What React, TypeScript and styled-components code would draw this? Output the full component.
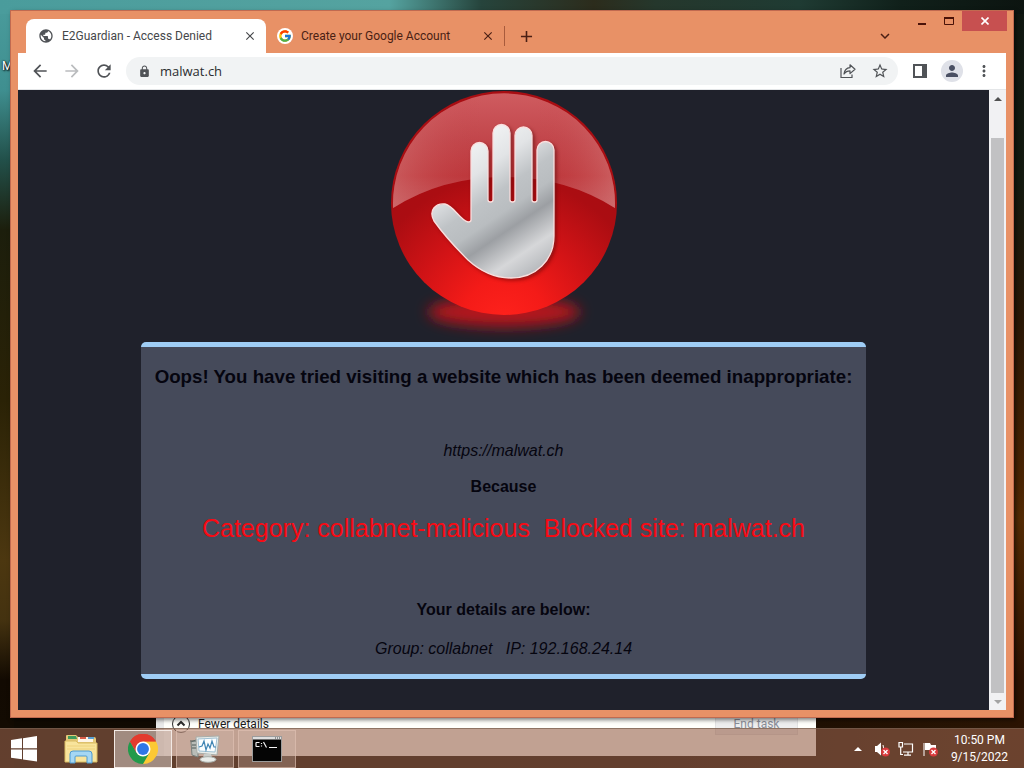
import React from "react";
import styled, { createGlobalStyle } from "styled-components";
import {
  MdArrowBack,
  MdArrowForward,
  MdRefresh,
  MdLock,
  MdStarBorder,
  MdPerson,
  MdMoreVert,
  MdPublic,
  MdClose,
  MdAdd,
  MdExpandMore,
} from "react-icons/md";
import { FcGoogle } from "react-icons/fc";

const GlobalStyle = createGlobalStyle`
  * { box-sizing: border-box; }
  body { margin: 0; font-family: Roboto, "Noto Sans", sans-serif; }
  button { padding: 0; border: 0; background: none; color: inherit; font: inherit; cursor: pointer; }
`;

const Desktop = styled.main`
  position: relative;
  display: flex;
  flex-direction: column;
  height: 100vh;
  min-height: 480px;
  overflow: hidden;
  background:
    linear-gradient(90deg, #4a9c9c 0%, #55a3a0 38%, #26443c 47%, #2c2c1c 58%, #25372c 64%, #1f3b33 78%, #10201a 88%, #0c1410 100%) top / 100% 14px no-repeat,
    linear-gradient(180deg, #4a9c9c 0, #3f8f90 90px, #22504a 160px, #1c1e0c 230px, #2a2206 400px, #4c3710 560px, #443210 620px, #120a02 680px, #140c02 100%) left / 14px 100% no-repeat,
    linear-gradient(180deg, #0f1711 0, #141a10 180px, #2a1705 320px, #4a2403 480px, #532a04 520px, #2c1202 680px, #2a1302 100%) right / 14px 100% no-repeat,
    linear-gradient(90deg, #100a02, #140a02 60%, #2c1604);
`;

const IconLabel = styled.span`
  position: absolute;
  left: 2px;
  top: 57px;
  font-size: 12px;
  line-height: 18px;
  color: #fff;
  text-shadow: 1px 1px 2px #000, 0 0 2px #000;
`;

const TaskManager = styled.section`
  position: absolute;
  left: 156px;
  right: 208px;
  bottom: 12px;
  height: 60px;
  display: flex;
  align-items: center;
  gap: 8px;
  padding: 0 18px 4px 16px;
  border-left: 8px solid #e9e9e9;
  background: #fffffb;
  font-size: 12px;
  line-height: 16px;
  color: #1c1c1c;
`;

const FewerDetails = styled.button`
  display: flex;
  align-items: center;
  gap: 8px;
  margin-left: -8px;
`;

const EndTask = styled.button`
  width: 83px;
  height: 21px;
  margin-left: auto;
  background: #eeeeee;
  border: 1px solid #e2e2e2;
  color: #8b8f99;
`;

const BrowserWindow = styled.section`
  position: relative;
  flex: 1;
  min-height: 0;
  display: flex;
  flex-direction: column;
  margin: 10px;
  padding: 0 7px 7px;
  border: 1px solid #c06a50;
  background: #e89166;
  box-shadow: 2px 2px 4px rgba(0, 0, 0, 0.5);
`;

const TitleBar = styled.header`
  display: flex;
  height: 42px;
  flex: none;
  align-items: stretch;
  padding-left: 8px;
  color: #4a1f14;
`;

const Tab = styled.div<{ $active?: boolean }>`
  display: flex;
  align-items: center;
  gap: 8px;
  width: ${(p) => (p.$active ? 240 : 238)}px;
  margin-top: 8px;
  padding: 0 9px 0 ${(p) => (p.$active ? 12 : 11)}px;
  border-radius: 8px 8px 0 0;
  background: ${(p) => (p.$active ? "#fff" : "transparent")};
  color: ${(p) => (p.$active ? "#45474a" : "#4a1f14")};
  font-size: 12px;
  line-height: 16px;
`;

const TabName = styled.button`
  flex: 1;
  display: flex;
  align-items: center;
  gap: 8px;
  text-align: left;
  white-space: nowrap;
`;

const SquareButton = styled.button`
  display: grid;
  place-items: center;
  width: 14px;
  height: 14px;
`;

const Favicon = styled.span`
  display: grid;
  place-items: center;
  width: 16px;
  height: 16px;
  border-radius: 50%;
  background: #fff;
`;

const NewTab = styled.button`
  display: grid;
  place-items: center;
  align-self: center;
  width: 44px;
  height: 20px;
  margin-top: 8px;
  border-left: 1px solid #a85b3c;
`;

const TabSearch = styled.button`
  display: grid;
  place-items: center;
  align-self: center;
  width: 20px;
  height: 20px;
  margin: 8px 13px 0 auto;
`;

const WindowControls = styled.div`
  display: flex;
  align-items: flex-start;
  margin-right: -1px;
`;

const Control = styled.button<{ $close?: boolean }>`
  display: grid;
  place-items: center;
  width: ${(p) => (p.$close ? 45 : 27)}px;
  height: 20px;
  background: ${(p) => (p.$close ? "#c75050" : "transparent")};
  color: ${(p) => (p.$close ? "#fff" : "#4a1208")};
`;

const Toolbar = styled.nav`
  display: flex;
  flex: none;
  align-items: center;
  height: 37px;
  padding: 0 6px;
  background: #fff;
  color: #505357;
  border-bottom: 1px solid #e4e6e8;
`;

const ToolButton = styled.button<{ $faded?: boolean }>`
  display: grid;
  place-items: center;
  width: 32px;
  height: 28px;
  color: ${(p) => (p.$faded ? "#babcbe" : "#505357")};
`;

const AddressBar = styled.div`
  flex: 1;
  display: flex;
  align-items: center;
  height: 28px;
  margin: 0 6px;
  padding: 0 2px 0 12px;
  border-radius: 14px;
  background: #f1f3f4;
`;

const AddressInput = styled.input`
  flex: 1;
  min-width: 0;
  margin-left: 9px;
  padding: 0;
  border: 0;
  outline: 0;
  background: none;
  font-family: "Open Sans", "Noto Sans", sans-serif;
  font-size: 13px;
  color: #2b2d30;
`;

const Avatar = styled.span`
  display: grid;
  place-items: center;
  width: 22px;
  height: 22px;
  border-radius: 50%;
  background: #dfe1e8;
  color: #4a5063;
`;

const Viewport = styled.div`
  flex: 1;
  min-height: 0;
  display: flex;
  background: #1f212b;
`;

const Page = styled.article`
  flex: 1;
  min-width: 0;
  overflow: hidden;
  display: flex;
  flex-direction: column;
  align-items: center;
  font-family: "Liberation Sans", Arial, sans-serif;
  text-align: center;
  color: #05050f;
`;

const Notice = styled.section`
  flex: none;
  margin-top: 2px;
  padding: 0 14px;
  border-top: 5px solid #9fcdf5;
  border-bottom: 5px solid #9fcdf5;
  border-radius: 5px;
  background: #454a5a;
  font-size: 16px;
  line-height: 18px;
`;

const Headline = styled.h3`
  margin: 18px 0 53px;
  line-height: 24px;
`;

const Line = styled.p`
  margin: 0 0 18px;
  font-style: italic;
  white-space: pre;

  &:last-child {
    margin-bottom: 16px;
  }
`;

const Subhead = styled.h4`
  margin: 0 0 21px;
  font-size: 16px;
  line-height: 18px;
`;

const Reason = styled.p`
  margin: 0 0 62px;
  font-size: 25px;
  line-height: 22px;
  color: #f80a14;
  white-space: pre;
`;

const Scrollbar = styled.div`
  flex: none;
  display: flex;
  flex-direction: column;
  width: 17px;
  background: #f1f1f3;
`;

const ScrollArrow = styled.button<{ $faded?: boolean }>`
  display: grid;
  place-items: center;
  height: 17px;
  color: ${(p) => (p.$faded ? "#a3a3a3" : "#505050")};
`;

const ScrollThumb = styled.div`
  flex: 1;
  margin: 31px 2px 0;
  background: #c1c1c3;
`;

const Taskbar = styled.footer`
  position: relative;
  flex: none;
  display: flex;
  align-items: center;
  height: 40px;
  padding-right: 16px;
  border-top: 1px solid rgba(120, 95, 80, 0.7);
  background: rgba(152, 98, 76, 0.6);
  color: #fff;
`;

const TaskButton = styled.button<{ $width: number; $state?: "open" | "active" }>`
  display: grid;
  place-items: center;
  width: ${(p) => p.$width}px;
  height: 38px;
  margin-right: ${(p) => (p.$state ? 4 : 0)}px;
  border: ${(p) => (p.$state ? "1px solid" : "0")};
  border-color: ${(p) => (p.$state === "active" ? "#f3e9e4" : "rgba(225, 195, 180, 0.6)")};
  background: ${(p) =>
    p.$state === "active" ? "rgba(225, 215, 210, 0.5)" : p.$state ? "rgba(215, 190, 178, 0.28)" : "none"};
`;

const Tray = styled.div`
  display: flex;
  align-items: center;
  gap: 8px;
  margin-left: auto;
`;

const TrayButton = styled.button`
  display: grid;
  place-items: center;
  width: 16px;
  height: 18px;
`;

const Clock = styled.time`
  margin-left: 5px;
  font-size: 12px;
  line-height: 17px;
  text-align: center;
`;

const HAND =
  "M87 130V61a8.500 8.500 0 0 1 17 0V110q0 2 2.500 2t2.500-2V43a8.500 8.500 0 0 1 17 0V110q0 2 2.500 2t2.500-2V45.500a8.500 8.500 0 0 1 17 0V110q0 2 2.500 2t2.500-2V60a8.500 8.500 0 0 1 17 0V146C170 170 152 188 127 188C109 188 95 180 84 170C72 158 60 145 50 131C44 120 52 113 61 114C70 116 76 130 84 132Q87 132 87 130Z";
const GLOSS = "M9.100 118A111 110 0 1 1 230.900 118Q182 87 120 87T9.100 118Z";

const StopHand = () => (
  <svg width="240" height="250" viewBox="0 0 240 250" role="img" aria-label="Stop">
    <defs>
      <radialGradient id="ball" gradientUnits="userSpaceOnUse" cx="120" cy="232" r="170">
        <stop offset="0" stopColor="#ff221c" />
        <stop offset="0.25" stopColor="#f41b18" />
        <stop offset="0.55" stopColor="#d01316" />
        <stop offset="0.85" stopColor="#ab0d12" />
        <stop offset="1" stopColor="#a80d12" />
      </radialGradient>
      <linearGradient id="gloss" x1="0" y1="0" x2="0" y2="1">
        <stop offset="0" stopColor="#cf5c60" />
        <stop offset="0.4" stopColor="#c2464b" />
        <stop offset="0.72" stopColor="#bd373b" />
        <stop offset="1" stopColor="#c25054" />
      </linearGradient>
      <linearGradient id="sheen" x1="0" y1="0" x2="1" y2="0">
        <stop offset="0" stopColor="#dc8d8c" stopOpacity="0.4" />
        <stop offset="0.4" stopColor="#c64146" stopOpacity="0" />
        <stop offset="0.65" stopColor="#c64146" stopOpacity="0" />
        <stop offset="1" stopColor="#dc8d8c" stopOpacity="0.45" />
      </linearGradient>
      <linearGradient id="steel" gradientUnits="userSpaceOnUse" x1="70" y1="50" x2="160" y2="184">
        <stop offset="0" stopColor="#f6f8f8" />
        <stop offset="0.25" stopColor="#e2e4e6" />
        <stop offset="0.42" stopColor="#bfc3c6" />
        <stop offset="0.54" stopColor="#b9bdc0" />
        <stop offset="0.65" stopColor="#9c9fa3" />
        <stop offset="0.82" stopColor="#d6d7d9" />
        <stop offset="1" stopColor="#aeb1b5" />
      </linearGradient>
      <filter id="soft" x="-20%" y="-20%" width="140%" height="140%">
        <feGaussianBlur stdDeviation="2" />
      </filter>
      <filter id="haze" x="-30%" y="-100%" width="160%" height="300%">
        <feGaussianBlur stdDeviation="7" />
      </filter>
    </defs>
    <ellipse cx="120" cy="222" rx="76" ry="15" fill="#b4181c" filter="url(#haze)" />
    <ellipse cx="120" cy="113" rx="113" ry="112" fill="url(#ball)" />
    <path d={GLOSS} fill="url(#gloss)" />
    <path d={GLOSS} fill="url(#sheen)" />
    <path d={HAND} transform="translate(2 2)" fill="#5b0b0e" opacity="0.7" filter="url(#soft)" />
    <path d={HAND} fill="url(#steel)" stroke="#fbdedd" strokeWidth="1.300" />
  </svg>
);

const ShareIcon = () => (
  <svg width="16" height="16" viewBox="0 0 16 16" fill="none" stroke="currentColor" strokeWidth="1.200" aria-hidden="true">
    <path d="M1 5V14.500H12V11.500" />
    <path d="M4 11C4.500 7 6.500 5 10 4.700V1.800L15 6.300 10 10.600V7.800C7.500 7.800 5.500 8.700 4 11Z" strokeLinejoin="round" />
  </svg>
);

const WindowsLogo = () => (
  <svg width="26" height="26" viewBox="0 0 26 26" fill="#fff" aria-hidden="true">
    <path d="M0 4 11 2.300V12.300H0ZM12 2.200 26 0V12.300H12ZM0 13.400H11V23.300L0 21.700ZM12 13.400H26V25.500L12 23.400Z" />
  </svg>
);

const ExplorerIcon = () => (
  <svg width="34" height="30" viewBox="0 0 34 30" aria-hidden="true">
    <path d="M2 5V2q0-1 1-1h9l2 2h16q2 0 2 2v22H2Z" fill="#e4c878" />
    <path d="M4 2h8l1 3H4Z" fill="#3f9b5c" />
    <path d="M14 3h15v5H14Z" fill="#fff5e6" />
    <path d="M16 3h6v2h-6Z" fill="#d85c48" />
    <path d="M24 3h6v2h-6Z" fill="#5aa2d4" />
    <path d="M1 7H12l2 2H33V28H1Z" fill="#f8e49c" stroke="#d9bb63" />
    <path d="M3 12H31M3 15H31" stroke="#eed27c" />
    <path d="M6 29V20q0-3 3-3H25q3 0 3 3v9H23V23q0-1-1-1H12q-1 0-1 1v6Z" fill="#a5d7f3" stroke="#4c9ad0" />
  </svg>
);

const ChromeLogo = () => (
  <svg width="30" height="30" viewBox="0 0 48 48" aria-hidden="true">
    <path d="M24 24 3.200 12A24 24 0 0 1 44.800 12Z" fill="#e33b2e" />
    <path d="M24 24V12H44.800A24 24 0 0 1 24 48Z" fill="#fcc934" />
    <path d="M3.200 12 13.600 30 24 24 34.400 30 24 48A24 24 0 0 1 3.200 12Z" fill="#229a4b" />
    <path d="M24 12H44.800L34.400 30Z" fill="#fcc934" />
    <path d="M3.200 12A24 24 0 0 1 44.800 12H24L13.600 30Z" fill="#e33b2e" />
    <circle cx="24" cy="24" r="12" fill="#fff" />
    <circle cx="24" cy="24" r="9.500" fill="#2f77e6" />
  </svg>
);

const MonitorIcon = () => (
  <svg width="30" height="28" viewBox="0 0 30 28" aria-hidden="true">
    <path d="M1 7 8 4V22L2 20Z" fill="#b9bdb8" stroke="#77807c" />
    <path d="M0 6H6M2 10H7M2 13H7" stroke="#4f5b58" />
    <path d="M6 2 29 1 27 20 7 18Z" fill="#e8ece9" stroke="#a8ada9" />
    <path d="M8 4 27 3 25 17 9 16Z" fill="#fbfeff" stroke="#9fc0d2" />
    <path d="M9 12 12 11 14 6 16 15 18 9 20 13 22 6 24 12H26" fill="none" stroke="#3f85b4" strokeWidth="1.200" />
    <path d="M14 19H21L22 23H13Z" fill="#c9cdca" />
    <ellipse cx="18" cy="24.500" rx="8" ry="2.800" fill="#e9ece9" stroke="#a8ada9" />
  </svg>
);

const ConsoleIcon = () => (
  <svg width="30" height="26" viewBox="0 0 30 26" aria-hidden="true">
    <rect x="0.500" y="0.500" width="29" height="25" fill="#050505" stroke="#9c9c9c" />
    <rect x="1" y="1" width="28" height="2.500" fill="#dedede" />
    <path d="M23 2H24M25 2H26M27 2H28" stroke="#444" />
    <g fill="none" stroke="#f4f4f4" strokeWidth="1.200">
      <path d="M7.500 6.500H4.500Q4 6.500 4 7V10Q4 10.500 4.500 10.500H7.500M9.500 7V8M9.500 9.500V10.500M11.500 6 14.500 11.500M17 11.500H25" />
    </g>
  </svg>
);

const RedCross = () => (
  <g>
    <circle cx="11.500" cy="11" r="4.500" fill="#d83a3c" />
    <path d="M9.500 9 13.500 13M13.500 9 9.500 13" stroke="#fff" strokeWidth="1.300" />
  </g>
);

const VolumeIcon = () => (
  <svg width="16" height="16" viewBox="0 0 16 16" aria-hidden="true">
    <path d="M1 5H3L7 1.500V14.500L3 11H1Z" fill="#fff" />
    <path d="M9 4Q10.500 8 9 12" fill="none" stroke="#fff" />
    <RedCross />
  </svg>
);

const NetworkIcon = () => (
  <svg width="16" height="16" viewBox="0 0 16 16" fill="none" stroke="#fff" strokeWidth="1.200" aria-hidden="true">
    <path d="M6 3H14.500V11H5M10 11V14M6 14.200H13" />
    <path d="M1 1.500H4.500V6H1ZM2.700 6V13.500H5" />
  </svg>
);

const FlagIcon = () => (
  <svg width="16" height="16" viewBox="0 0 16 16" aria-hidden="true">
    <path d="M2 2V15" stroke="#fff" />
    <path d="M3 2H8L9 4H14V10L8 9H3Z" fill="#fff" />
    <RedCross />
  </svg>
);

const Triangle = ({ down }: { down?: boolean }) => (
  <svg width="8" height="4" viewBox="0 0 8 4" fill="currentColor" aria-hidden="true">
    <path d={down ? "M0 0H8L4 4Z" : "M0 4H8L4 0Z"} />
  </svg>
);

export default function App() {
  return (
    <Desktop>
      <GlobalStyle />
      <IconLabel>M</IconLabel>
      <TaskManager aria-label="Task Manager">
        <FewerDetails>
          <svg width="18" height="18" viewBox="0 0 18 18" fill="none" stroke="#2c2c2c" aria-hidden="true">
            <circle cx="9" cy="9" r="8.500" />
            <path d="M5.500 10.500 9 7 12.500 10.500" strokeWidth="2" />
          </svg>
          Fewer details
        </FewerDetails>
        <EndTask>End task</EndTask>
      </TaskManager>

      <BrowserWindow aria-label="Browser">
        <TitleBar>
          <Tab $active>
            <TabName>
              <MdPublic size={16} color="#505357" />
              E2Guardian - Access Denied
            </TabName>
            <SquareButton aria-label="Close tab">
              <MdClose size={14} />
            </SquareButton>
          </Tab>
          <Tab>
            <TabName>
              <Favicon>
                <FcGoogle size={14} />
              </Favicon>
              Create your Google Account
            </TabName>
            <SquareButton aria-label="Close tab">
              <MdClose size={14} />
            </SquareButton>
          </Tab>
          <NewTab aria-label="New tab">
            <MdAdd size={19} />
          </NewTab>
          <TabSearch aria-label="Search tabs">
            <MdExpandMore size={18} />
          </TabSearch>
          <WindowControls>
            <Control aria-label="Minimize">
              <svg width="8" height="12" viewBox="0 0 8 12" aria-hidden="true">
                <path d="M0 9H8" stroke="currentColor" strokeWidth="2" />
              </svg>
            </Control>
            <Control aria-label="Maximize">
              <svg width="10" height="8" viewBox="0 0 10 8" fill="none" stroke="currentColor" aria-hidden="true">
                <path d="M0.500 1V7.500H9.500V1" />
                <path d="M0 1H10" strokeWidth="2" />
              </svg>
            </Control>
            <Control $close aria-label="Close">
              <svg width="8" height="8" viewBox="0 0 8 8" aria-hidden="true">
                <path d="M0.500 0.500 7.500 7.500M7.500 0.500 0.500 7.500" stroke="currentColor" strokeWidth="1.600" />
              </svg>
            </Control>
          </WindowControls>
        </TitleBar>

        <Toolbar>
          <ToolButton aria-label="Back">
            <MdArrowBack size={20} />
          </ToolButton>
          <ToolButton $faded aria-label="Forward">
            <MdArrowForward size={20} />
          </ToolButton>
          <ToolButton aria-label="Reload">
            <MdRefresh size={20} />
          </ToolButton>
          <AddressBar>
            <MdLock size={13} />
            <AddressInput aria-label="Address" defaultValue="malwat.ch" />
            <ToolButton aria-label="Share">
              <ShareIcon />
            </ToolButton>
            <ToolButton aria-label="Bookmark">
              <MdStarBorder size={18} />
            </ToolButton>
          </AddressBar>
          <ToolButton aria-label="Side panel">
            <svg width="14" height="14" viewBox="0 0 14 14" aria-hidden="true">
              <path d="M1 1H13V13H1Z" fill="none" stroke="currentColor" strokeWidth="2" />
              <path d="M9 0H14V14H9Z" fill="currentColor" />
            </svg>
          </ToolButton>
          <ToolButton aria-label="Profile">
            <Avatar>
              <MdPerson size={18} />
            </Avatar>
          </ToolButton>
          <ToolButton aria-label="Menu">
            <MdMoreVert size={18} />
          </ToolButton>
        </Toolbar>

        <Viewport>
          <Page>
            <StopHand />
            <Notice>
              <Headline>Oops! You have tried visiting a website which has been deemed inappropriate:</Headline>
              <Line>https://malwat.ch</Line>
              <Subhead>Because</Subhead>
              <Reason>{"Category: collabnet-malicious  Blocked site: malwat.ch"}</Reason>
              <Subhead>Your details are below:</Subhead>
              <Line>{"Group: collabnet   IP: 192.168.24.14"}</Line>
            </Notice>
          </Page>
          <Scrollbar>
            <ScrollArrow aria-label="Scroll up">
              <Triangle />
            </ScrollArrow>
            <ScrollThumb />
            <ScrollArrow $faded aria-label="Scroll down">
              <Triangle down />
            </ScrollArrow>
          </Scrollbar>
        </Viewport>
      </BrowserWindow>

      <Taskbar>
        <TaskButton $width={48} aria-label="Start">
          <WindowsLogo />
        </TaskButton>
        <TaskButton $width={66} aria-label="File Explorer">
          <ExplorerIcon />
        </TaskButton>
        <TaskButton $width={58} $state="active" aria-label="Google Chrome">
          <ChromeLogo />
        </TaskButton>
        <TaskButton $width={58} $state="open" aria-label="Task Manager">
          <MonitorIcon />
        </TaskButton>
        <TaskButton $width={58} $state="open" aria-label="Command Prompt">
          <ConsoleIcon />
        </TaskButton>
        <Tray>
          <TrayButton aria-label="Show hidden icons">
            <Triangle />
          </TrayButton>
          <TrayButton aria-label="Volume">
            <VolumeIcon />
          </TrayButton>
          <TrayButton aria-label="Network">
            <NetworkIcon />
          </TrayButton>
          <TrayButton aria-label="Action Center">
            <FlagIcon />
          </TrayButton>
          <Clock>
            10:50 PM
            <br />
            9/15/2022
          </Clock>
        </Tray>
      </Taskbar>
    </Desktop>
  );
}
